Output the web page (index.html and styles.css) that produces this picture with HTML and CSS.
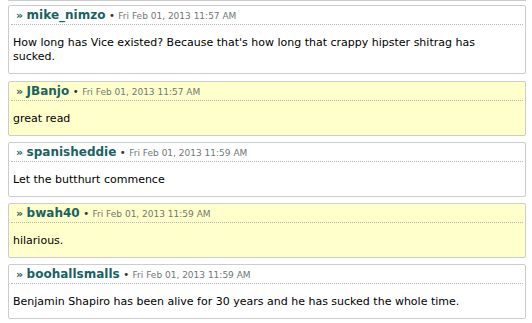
FILE: index.html
```html
<!DOCTYPE html>
<html lang="en">
<head>
  <meta charset="utf-8">
  <title>Comments</title>
  <link rel="stylesheet" href="styles.css">
</head>
<body>

  <div id="comments">
    <div class="comment cut"></div>

    <div class="comment first">
      <div class="meta">
        <span class="arrow">&raquo;</span> <span class="user">mike_nimzo</span>
        <span class="dot">&bull;</span> <span class="date">Fri Feb 01, 2013 11:57 AM</span>
      </div>
      <div class="text">How long has Vice existed? Because that's how long that crappy hipster shitrag has sucked.</div>
    </div>

    <div class="comment alt">
      <div class="meta">
        <span class="arrow">&raquo;</span> <span class="user">JBanjo</span>
        <span class="dot">&bull;</span> <span class="date">Fri Feb 01, 2013 11:57 AM</span>
      </div>
      <div class="text">great read</div>
    </div>

    <div class="comment">
      <div class="meta">
        <span class="arrow">&raquo;</span> <span class="user">spanisheddie</span>
        <span class="dot">&bull;</span> <span class="date">Fri Feb 01, 2013 11:59 AM</span>
      </div>
      <div class="text">Let the butthurt commence</div>
    </div>

    <div class="comment alt">
      <div class="meta">
        <span class="arrow">&raquo;</span> <span class="user">bwah40</span>
        <span class="dot">&bull;</span> <span class="date">Fri Feb 01, 2013 11:59 AM</span>
      </div>
      <div class="text">hilarious.</div>
    </div>

    <div class="comment">
      <div class="meta">
        <span class="arrow">&raquo;</span> <span class="user">boohallsmalls</span>
        <span class="dot">&bull;</span> <span class="date">Fri Feb 01, 2013 11:59 AM</span>
      </div>
      <div class="text">Benjamin Shapiro has been alive for 30 years and he has sucked the whole time.</div>
    </div>
  </div>

</body>
</html>
```

FILE: styles.css
```css
html, body {
  margin: 0;
  background: white;
}
body {
  font-family: "DejaVu Sans", Verdana, sans-serif;
  font-size: 11px;
  color: black;
}
#comments {
  display: flex;
  flex-direction: column;
  gap: 6px;
  padding: 0 6px 0 8px;
}
.comment {
  background: white;
  border: 1px solid #cccccc;
  border-radius: 2px;
}
.comment.alt {
  background: #ffffcc;
}
.comment.first {
  margin-bottom: 1px;
}
.comment.cut {
  height: 0;
  border-top: none;
  margin-bottom: -2px;
}
.meta {
  height: 17px;
  overflow: hidden;
  margin: 0 2px;
  padding: 1px 4px 0 5px;
  border-bottom: 1px dotted #b8b8b8;
  line-height: 17px;
}
.meta span {
  line-height: 15px;
}
.arrow {
  font-weight: bold;
  color: #1a6262;
  font-size: 11px;
}
.user {
  font-weight: bold;
  font-size: 12px;
  color: #1a6262;
}
.dot {
  color: #333;
  font-size: 10px;
}
.date {
  font-size: 9px;
  color: #6f7777;
}
.text {
  padding: 11px 30px 9px 4px;
  line-height: 14px;
}
```
